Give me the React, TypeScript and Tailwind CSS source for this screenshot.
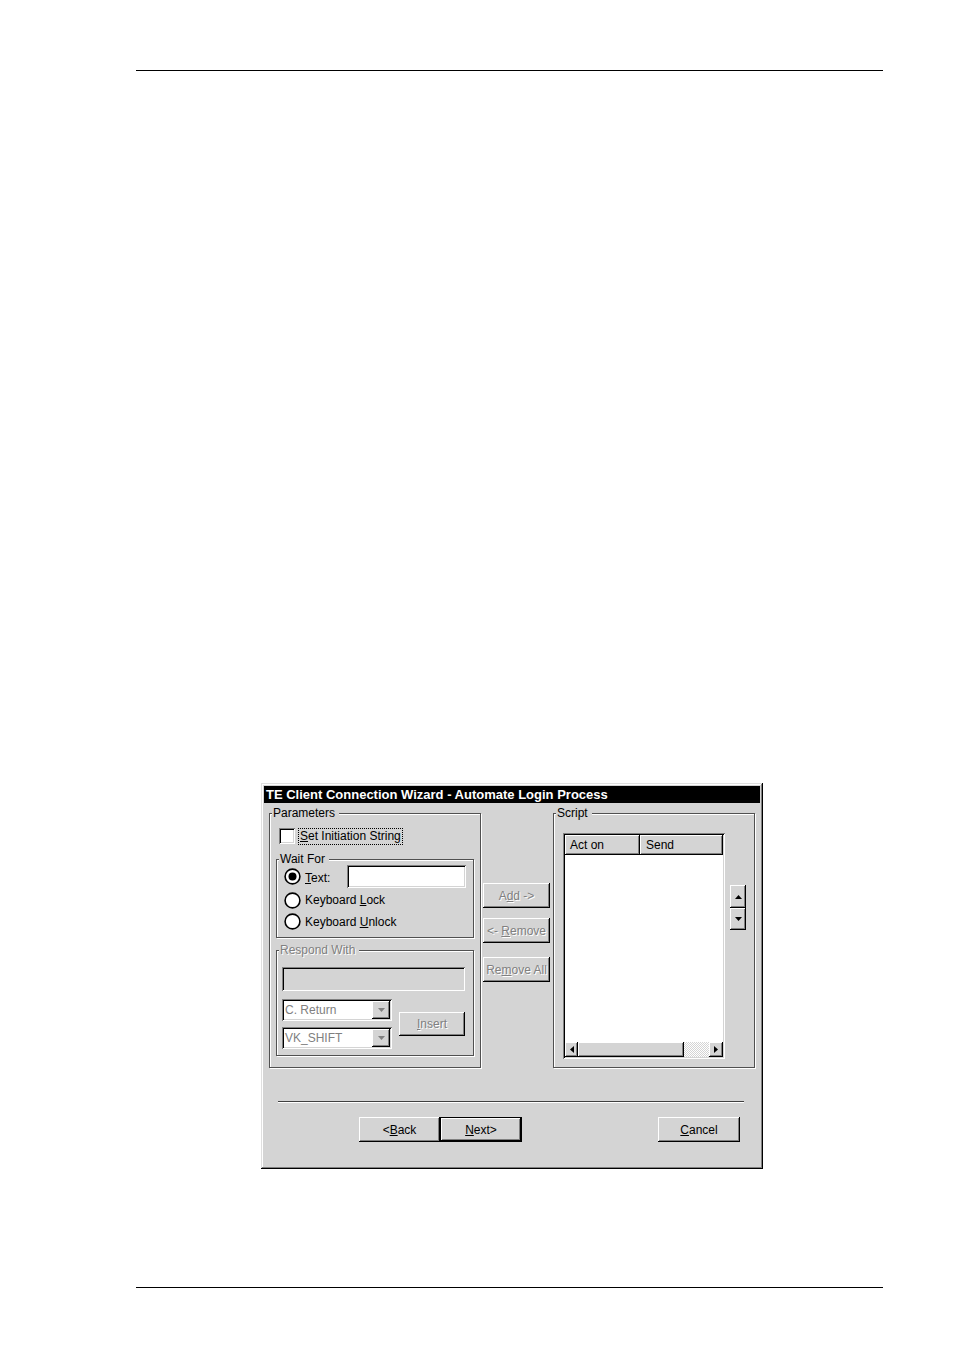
import React from 'react';

// Win9x style bevels
const raised =
  'shadow-[inset_-1px_-1px_#000,inset_1px_1px_#fff,inset_-2px_-2px_#808080,inset_2px_2px_#d4d4d4]';
const sunken =
  'shadow-[inset_1px_1px_#808080,inset_-1px_-1px_#fff,inset_2px_2px_#000,inset_-2px_-2px_#d4d4d4]';
const disabledText = 'text-[#808080] [text-shadow:1px_1px_0_#fff]';

function Group({
  label,
  disabled,
  className,
  children,
}: {
  label: string;
  disabled?: boolean;
  className: string;
  children?: React.ReactNode;
}) {
  return (
    <div className={`relative border border-[#505050] shadow-[inset_1px_1px_#fff,1px_1px_#fff] ${className}`}>
      <span
        className={`absolute -top-[8px] left-[2px] bg-[#d4d4d4] pl-px pr-[4px] leading-[14px] whitespace-nowrap ${
          disabled ? disabledText : ''
        }`}
      >
        {label}
      </span>
      {children}
    </div>
  );
}

function Button({
  children,
  disabled,
  isDefault,
  className,
}: {
  children: React.ReactNode;
  disabled?: boolean;
  isDefault?: boolean;
  className: string;
}) {
  return (
    <div
      className={`flex items-center justify-center bg-[#d4d4d4] ${raised} ${
        isDefault ? 'border border-black' : ''
      } ${disabled ? disabledText : 'text-black'} ${className}`}
    >
      {children}
    </div>
  );
}

function Radio({ checked }: { checked?: boolean }) {
  return (
    <svg width="17" height="17" viewBox="0 0 17 17" className="shrink-0">
      <circle cx="8.5" cy="8.5" r="7.4" fill="#fff" stroke="#000" strokeWidth="1.6" />
      {checked && <circle cx="8.5" cy="8.5" r="4" fill="#000" />}
    </svg>
  );
}

function Tri({ dir, color = '#000' }: { dir: 'up' | 'down' | 'left' | 'right'; color?: string }) {
  const pts = {
    up: '0,4 3.5,0 7,4',
    down: '0,0 7,0 3.5,4',
    left: '4,0 4,7 0,3.5',
    right: '0,0 4,3.5 0,7',
  }[dir];
  const vertical = dir === 'up' || dir === 'down';
  return (
    <svg width={vertical ? 7 : 4} height={vertical ? 4 : 7} viewBox={vertical ? '0 0 7 4' : '0 0 4 7'}>
      <polygon points={pts} fill={color} />
    </svg>
  );
}

function Combo({ value }: { value: string }) {
  return (
    <div className={`flex items-center w-[110px] h-[22px] bg-white p-[2px] ${sunken}`}>
      <span className="flex-1 pl-px leading-[14px] text-[#808080]">{value}</span>
      <div className={`flex items-center justify-center w-[18px] h-[18px] bg-[#d4d4d4] ${raised}`}>
        <Tri dir="down" color="#808080" />
      </div>
    </div>
  );
}

export default function App() {
  return (
    <div className="w-[954px] h-[1352px] bg-white pt-[70px] flex flex-col font-['Liberation_Sans',Arial,sans-serif] text-[12px] text-black">
      <div className="ml-[136px] w-[747px] h-px bg-black" />

      {/* dialog */}
      <div
        className={`ml-[261px] mt-[712px] w-[502px] h-[386px] bg-[#d4d4d4] p-[3px] flex flex-col shadow-[inset_-1px_-1px_#000,inset_1px_1px_#dfdfdf,inset_-2px_-2px_#808080,inset_2px_2px_#fff]`}
      >
        <div className="h-[17px] bg-black text-white text-[13px] font-bold pl-[2px] leading-[17px] whitespace-nowrap">
          TE Client Connection Wizard - Automate Login Process
        </div>

        <div className="flex items-start px-[5px]">
          {/* Parameters */}
          <Group label="Parameters" className="mt-[10px] w-[212px] h-[255px]">
            <div className="flex items-center mt-[14px] ml-[9px]">
              <div className={`w-[16px] h-[16px] bg-white ${sunken}`} />
              <span className="ml-[4px] px-px leading-[15px] outline outline-1 outline-dotted outline-black">
                <u>S</u>et Initiation String
              </span>
            </div>

            <Group label="Wait For" className="ml-[6px] mt-[15px] w-[198px] h-[79px]">
              <div className="flex items-center mt-[5px] h-[23px] pl-[7px]">
                <Radio checked />
                <span className="ml-[4px] pt-[2px]">
                  <u>T</u>ext:
                </span>
                <div className={`ml-auto mr-[7px] w-[119px] h-[23px] bg-white ${sunken}`} />
              </div>
              <div className="flex items-center h-[22px] pl-[7px] pt-[2px]">
                <Radio />
                <span className="ml-[4px]">
                  Keyboard <u>L</u>ock
                </span>
              </div>
              <div className="flex items-center h-[21px] pl-[7px] pt-[2px]">
                <Radio />
                <span className="ml-[4px]">
                  Keyboard <u>U</u>nlock
                </span>
              </div>
            </Group>

            <Group label="Respond With" disabled className="ml-[6px] mt-[12px] w-[198px] h-[106px]">
              <div className={`ml-[5px] mt-[16px] w-[183px] h-[24px] bg-[#d4d4d4] ${sunken}`} />
              <div className="flex items-start ml-[5px] mt-[8px]">
                <div className="flex flex-col gap-[6px]">
                  <Combo value="C. Return" />
                  <Combo value="VK_SHIFT" />
                </div>
                <Button disabled className="ml-[7px] mt-[13px] w-[66px] h-[24px]">
                  <span>
                    <u>I</u>nsert
                  </span>
                </Button>
              </div>
            </Group>
          </Group>

          {/* middle buttons */}
          <div className="ml-[2px] w-[67px] flex flex-col">
            <Button disabled className="mt-[80px] h-[25px]">
              <span>
                A<u>d</u>d -&gt;
              </span>
            </Button>
            <Button disabled className="mt-[10px] h-[25px]">
              <span>
                &lt;- <u>R</u>emove
              </span>
            </Button>
            <Button disabled className="mt-[14px] h-[25px]">
              <span>
                Re<u>m</u>ove All
              </span>
            </Button>
          </div>

          {/* Script */}
          <Group label="Script" className="ml-[3px] mt-[10px] w-[202px] h-[255px]">
            <div className="flex items-start">
              <div className={`ml-[9px] mt-[19px] w-[162px] h-[226px] bg-white p-[2px] flex flex-col ${sunken}`}>
                <div className="flex h-[20px]">
                  <div className={`w-[75px] bg-[#d4d4d4] pl-[5px] leading-[21px] ${raised}`}>Act on</div>
                  <div className={`flex-1 bg-[#d4d4d4] pl-[6px] leading-[21px] ${raised}`}>Send</div>
                </div>
                <div className="flex-1" />
                <div className="flex h-[15px]">
                  <div className={`w-[13px] flex items-center justify-center bg-[#d4d4d4] ${raised}`}>
                    <Tri dir="left" />
                  </div>
                  <div className={`w-[106px] bg-[#d4d4d4] ${raised}`} />
                  <div className="flex-1 bg-[image:repeating-conic-gradient(#fff_0_25%,#d4d4d4_0_50%)] bg-[length:2px_2px]" />
                  <div className={`w-[14px] flex items-center justify-center bg-[#d4d4d4] ${raised}`}>
                    <Tri dir="right" />
                  </div>
                </div>
              </div>
              <div className="ml-[5px] mt-[71px] flex flex-col">
                <div className={`w-[16px] h-[23px] flex items-center justify-center bg-[#d4d4d4] ${raised}`}>
                  <Tri dir="up" />
                </div>
                <div className={`w-[16px] h-[22px] flex items-center justify-center bg-[#d4d4d4] ${raised}`}>
                  <Tri dir="down" />
                </div>
              </div>
            </div>
          </Group>
        </div>

        {/* separator */}
        <div className="ml-[14px] mt-[33px] w-[466px] h-[2px] border-t border-t-[#404040] border-b border-b-white" />

        {/* wizard buttons */}
        <div className="flex mt-[14px] ml-[95px]">
          <Button className="w-[81px] h-[25px]">
            <span>
              &lt;<u>B</u>ack
            </span>
          </Button>
          <Button isDefault className="w-[82px] h-[25px]">
            <span>
              <u>N</u>ext&gt;
            </span>
          </Button>
          <Button className="ml-[136px] w-[82px] h-[25px]">
            <span>
              <u>C</u>ancel
            </span>
          </Button>
        </div>
      </div>

      <div className="ml-[136px] mt-[118px] w-[747px] h-px bg-black" />
    </div>
  );
}
